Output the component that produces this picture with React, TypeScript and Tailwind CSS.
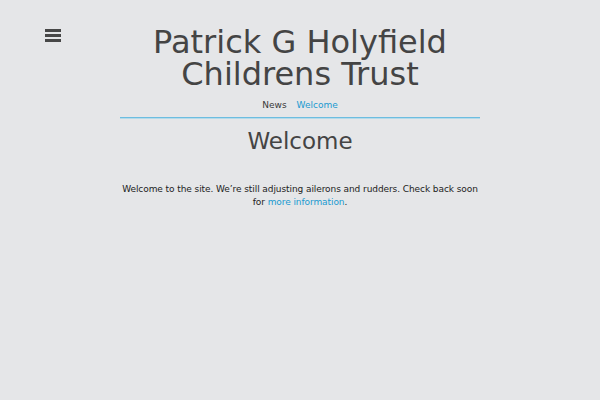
import React from "react";

export default function App() {
  return (
    <div className="relative min-h-[400px] w-full bg-[#e5e6e8] font-['DejaVu_Sans',sans-serif] text-[#444444]">
      <button className="absolute left-[45px] top-[29px] flex w-[16px] flex-col gap-[2px]">
        <span className="block h-[3px] w-full bg-[#474747]" />
        <span className="block h-[3px] w-full bg-[#474747]" />
        <span className="block h-[3px] w-full bg-[#474747]" />
      </button>
      <div className="mx-auto flex w-[360px] flex-col items-center pt-[26px]">
        <h1 className="text-center text-[32px] leading-[32px] text-[#444444]">
          Patrick G Holyfield
          <br />
          Childrens Trust
        </h1>
        <nav className="mt-[8px] flex gap-[10px] text-[9px] leading-[14px]">
          <a className="text-[#3a3a3a]">News</a>
          <a className="text-[#1a9ad0]">Welcome</a>
        </nav>
        <div className="mt-[5px] flex w-full flex-col">
          <div className="h-px w-full bg-[#6dbde0]" />
          <div className="h-px w-full bg-[#b4dbea]" />
        </div>
        <h2 className="mt-[7px] text-[23px] leading-[30px] text-[#444444]">Welcome</h2>
        <p className="mt-[27px] w-full text-center text-[9px] leading-[13px] tracking-[-0.08px] text-[#222222]">
          Welcome to the site. We’re still adjusting ailerons and rudders. Check back soon for{" "}
          <a className="text-[#1a9ad0]">more information</a>.
        </p>
      </div>
    </div>
  );
}
